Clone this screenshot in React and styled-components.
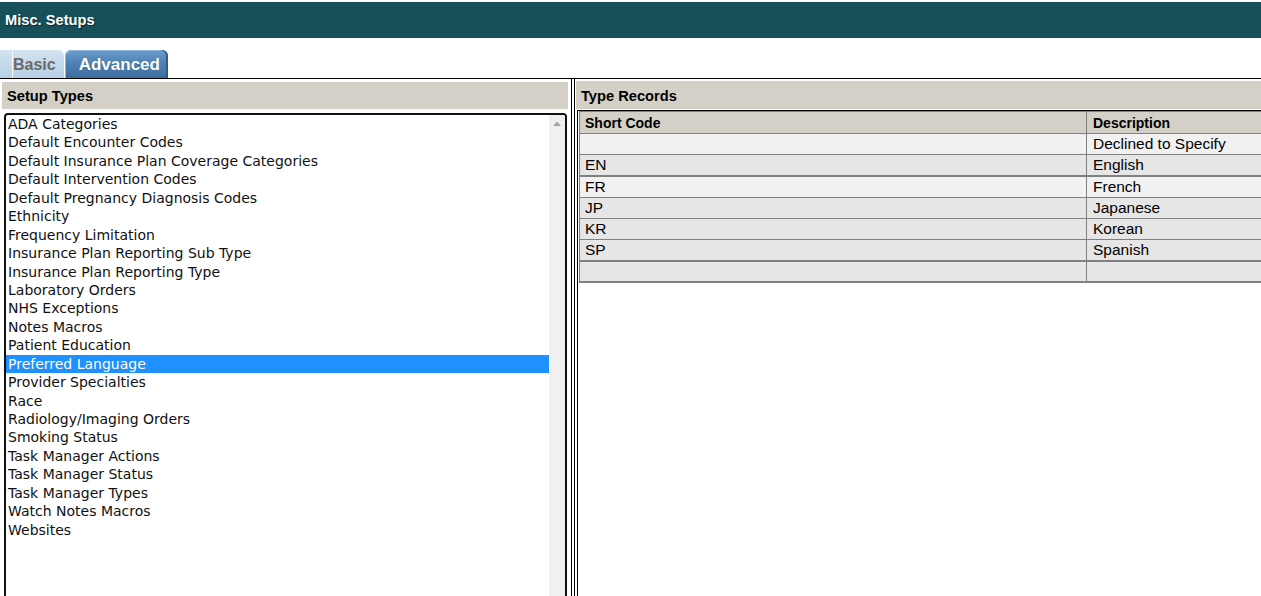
import React, { useState } from "react";
import styled, { createGlobalStyle } from "styled-components";

const GlobalStyle = createGlobalStyle`
  html, body {
    margin: 0;
    padding: 0;
    overflow: hidden;
    background: #fff;
  }
  body {
    font-family: "Liberation Sans", Arial, sans-serif;
    color: #000;
  }
`;

let Page = styled.div`
  height: 596px;
  display: flex;
  flex-direction: column;
  overflow: hidden;
`;

let TitleBar = styled.div`
  margin-top: 2px;
  height: 36px;
  flex-shrink: 0;
  background: #18505a;
  color: #fff;
  font-weight: bold;
  font-size: 14.67px;
  padding-left: 5px;
  display: flex;
  align-items: center;
  text-shadow: 1px 1px 1px rgba(0, 0, 0, 0.55);
`;

let TabStrip = styled.div`
  margin-top: 12px;
  height: 28px;
  flex-shrink: 0;
  display: flex;
  align-items: flex-end;
  gap: 1px;
`;

let Tab = styled.div`
  height: 28px;
  box-sizing: border-box;
  display: flex;
  align-items: center;
  font-weight: bold;
  cursor: pointer;
  ${(p) =>
    p.$active
      ? `
    padding: 1px 8px 0 14px;
    font-size: 17px;
    color: #fff;
    border-radius: 6px 6px 0 0;
    background: linear-gradient(#6b9ccb 0%, #4f83b6 45%, #3d6d9d 100%);
    box-shadow: inset -2px 0 0 #2f5b86, inset 1px 1px 0 #8fb6dc;
    text-shadow: 0 0 1px rgba(0,0,0,0.3);
  `
      : `
    padding: 1px 8px 0 13px;
    font-size: 16px;
    color: #6a6a6a;
    border-radius: 0 6px 0 0;
    background:
      linear-gradient(to right, transparent 12px, #f4f8fb 12px, #f4f8fb 13px, transparent 13px),
      linear-gradient(#d3e3f0, #b7cfe4);
  `}
`;

let Main = styled.div`
  flex: 1;
  min-height: 0;
  display: flex;
  border-top: 1px solid #000;
`;

let LeftPanel = styled.div`
  width: 572px;
  flex-shrink: 0;
  box-sizing: border-box;
  border-right: 1px solid #000;
  padding: 3px 3px 0 2px;
  display: flex;
  flex-direction: column;
  overflow: hidden;
`;

let PanelHeader = styled.div`
  height: ${(p) => p.$h}px;
  flex-shrink: 0;
  box-sizing: border-box;
  background: #d4d0c8;
  font-weight: bold;
  font-size: 14.67px;
  padding: 1px 0 0 5px;
  display: flex;
  align-items: center;
`;

let ListBox = styled.div`
  margin: 4px 1px 0 2px;
  height: 490px;
  flex-shrink: 0;
  box-sizing: border-box;
  border: 2px solid #111;
  border-radius: 4px;
  display: flex;
  overflow: hidden;
  background: #fff;
`;

let OptionList = styled.div`
  flex: 1;
  min-width: 0;
`;

let Option = styled.div`
  height: 18.45px;
  line-height: 18.45px;
  padding-left: 2px;
  font-family: "DejaVu Sans", Verdana, sans-serif;
  font-size: 14px;
  white-space: nowrap;
  cursor: default;
  color: ${(p) => (p.$selected ? "#fff" : "#111")};
  background: ${(p) => (p.$selected ? "#1e90ff" : "transparent")};
`;

let ScrollTrack = styled.div`
  width: 16px;
  flex-shrink: 0;
  background: #f0f0f0;
`;

let ScrollButton = styled.div`
  height: 16px;
  display: flex;
  align-items: center;
  justify-content: center;
  padding-top: 1px;
  box-sizing: border-box;
`;

let RightPanel = styled.div`
  flex: 1;
  min-width: 0;
  margin-left: 2px;
  border-left: 1px solid #000;
  padding: 2px 0 0 1px;
  display: flex;
  flex-direction: column;
  overflow: hidden;
`;

let GridArea = styled.div`
  flex: 1;
  margin: 1px 0 0 1px;
  border-top: 1px solid #000;
  border-left: 1px solid #000;
  padding-left: 1px;
  overflow: hidden;
`;

let Grid = styled.div`
  width: 800px;
  border-top: 1px solid #808080;
  border-left: 1px solid #808080;
`;

let Row = styled.div`
  display: grid;
  grid-template-columns: 507px 1fr;
  box-sizing: border-box;
  height: ${(p) => p.$h}px;
  border-bottom: ${(p) => p.$b}px solid #808080;
  background: ${(p) => p.$bg};
`;

let Cell = styled.div`
  display: flex;
  align-items: center;
  padding-left: ${(p) => (p.$first ? 5 : 6)}px;
  border-right: ${(p) => (p.$first ? "1px solid #808080" : "none")};
  font-size: ${(p) => (p.$head ? "14px" : "15.5px")};
  font-weight: ${(p) => (p.$head ? "bold" : "normal")};
  padding-top: ${(p) => (p.$head ? 1 : 0)}px;
  white-space: nowrap;
`;

const setupTypes = [
  "ADA Categories",
  "Default Encounter Codes",
  "Default Insurance Plan Coverage Categories",
  "Default Intervention Codes",
  "Default Pregnancy Diagnosis Codes",
  "Ethnicity",
  "Frequency Limitation",
  "Insurance Plan Reporting Sub Type",
  "Insurance Plan Reporting Type",
  "Laboratory Orders",
  "NHS Exceptions",
  "Notes Macros",
  "Patient Education",
  "Preferred Language",
  "Provider Specialties",
  "Race",
  "Radiology/Imaging Orders",
  "Smoking Status",
  "Task Manager Actions",
  "Task Manager Status",
  "Task Manager Types",
  "Watch Notes Macros",
  "Websites",
];

// 행 높이 / 아래 테두리 두께 / 배경색
const records = [
  { code: "", desc: "Declined to Specify", h: 21, b: 1, bg: "#f1f1f1" },
  { code: "EN", desc: "English", h: 22, b: 2, bg: "#e6e6e6" },
  { code: "FR", desc: "French", h: 21, b: 1, bg: "#f1f1f1" },
  { code: "JP", desc: "Japanese", h: 21, b: 1, bg: "#e6e6e6" },
  { code: "KR", desc: "Korean", h: 21, b: 1, bg: "#e6e6e6" },
  { code: "SP", desc: "Spanish", h: 22, b: 2, bg: "#e6e6e6" },
  { code: "", desc: "", h: 21, b: 2, bg: "#e6e6e6" },
];

function App() {
  let [tab, setTab] = useState(1);
  let [selected, setSelected] = useState("Preferred Language");

  return (
    <Page>
      <GlobalStyle />
      <TitleBar>Misc. Setups</TitleBar>
      <TabStrip>
        <Tab $active={tab == 0} onClick={() => setTab(0)}>Basic</Tab>
        <Tab $active={tab == 1} onClick={() => setTab(1)}>Advanced</Tab>
      </TabStrip>
      <Main>
        <LeftPanel>
          <PanelHeader $h={27}>Setup Types</PanelHeader>
          <ListBox>
            <OptionList>
              {setupTypes.map((t) => (
                <Option key={t} $selected={t == selected} onClick={() => setSelected(t)}>
                  {t}
                </Option>
              ))}
            </OptionList>
            <ScrollTrack>
              <ScrollButton>
                <svg width="8" height="5" viewBox="0 0 8 5">
                  <path d="M0 5 L4 0.5 L8 5 Z" fill="#a3a3a3" />
                </svg>
              </ScrollButton>
            </ScrollTrack>
          </ListBox>
        </LeftPanel>
        <RightPanel>
          <PanelHeader $h={28}>Type Records</PanelHeader>
          <GridArea>
            <Grid>
              <Row $h={22} $b={1} $bg="#d4d0c8">
                <Cell $first $head>Short Code</Cell>
                <Cell $head>Description</Cell>
              </Row>
              {records.map((r, i) => (
                <Row key={i} $h={r.h} $b={r.b} $bg={r.bg}>
                  <Cell $first>{r.code}</Cell>
                  <Cell>{r.desc}</Cell>
                </Row>
              ))}
            </Grid>
          </GridArea>
        </RightPanel>
      </Main>
    </Page>
  );
}

export default App;
